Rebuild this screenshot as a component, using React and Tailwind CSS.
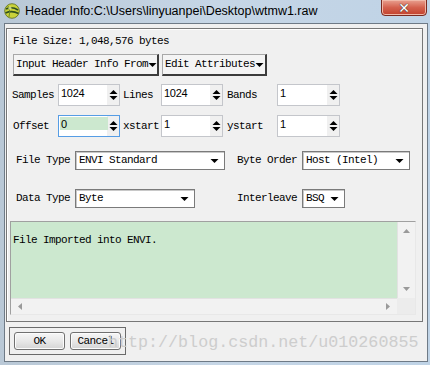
import React from "react";

const mono = { fontFamily: "'Liberation Mono', 'DejaVu Sans Mono', monospace" };

function Spin() {
  return (
    <svg width="9" height="12" viewBox="0 0 9 12" className="shrink-0">
      <polygon points="0.5,5 4.5,1 8.5,5" fill="#000" />
      <polygon points="0.5,7 8.5,7 4.5,11" fill="#000" />
    </svg>
  );
}

function Down({ w = 9 }) {
  return (
    <svg width={w} height="6" viewBox="0 0 9 6" className="shrink-0">
      <polygon points="0.5,1 8.5,1 4.5,5" fill="#000" />
    </svg>
  );
}

function SpinBox({ value, focused, w = "w-[62px]" }) {
  return (
    <div
      className={`${w} h-[22px] flex items-stretch bg-white border ${
        focused ? "border-[#569de5]" : "border-[#c4c6cb]"
      }`}
    >
      <div className="flex-1 relative pl-[2px] pt-[2px] leading-[13px]">
        {focused && <div className="absolute left-[1px] top-[1px] w-[48px] h-[13px] bg-[#cce8cf]" />}
        <div
          className="relative text-[11px] leading-[12px] tracking-[-0.3px] text-black"
          style={{ fontFamily: "'Liberation Sans', Arial, sans-serif" }}
        >
          {value}
        </div>
      </div>
      <div className="w-[12px] flex items-center justify-center bg-[#f0f0f0]">
        <Spin />
      </div>
    </div>
  );
}

function Label({ children, w, pl }) {
  return (
    <div className={`${w} ${pl} text-[11px] tracking-[-0.6px] text-black leading-[13px] whitespace-nowrap`} style={mono}>
      {children}
    </div>
  );
}

function Combo({ value, w }) {
  return (
    <div className={`${w} h-[19px] flex items-center bg-white border border-[#7a7a7a] shadow-[inset_1px_1px_0_#c8c8c8] pl-[3px] pr-[5px]`}>
      <span className="flex-1 text-[11px] tracking-[-0.6px] leading-[13px] text-black whitespace-nowrap" style={mono}>
        {value}
      </span>
      <Down />
    </div>
  );
}

function ClassicButton({ children, w }) {
  return (
    <div
      className={`${w} h-[22px] flex items-center pl-[2px] bg-[#f4f4f4] border border-t-[#a8a8a8] border-l-[#a8a8a8] border-r-2 border-b-2 border-r-[#3c3c3c] border-b-[#3c3c3c]`}
    >
      <span className="text-[11px] tracking-[-0.6px] leading-[13px] text-black whitespace-nowrap" style={mono}>
        {children}
      </span>
      <Down w={9} />
    </div>
  );
}

function AeroButton({ children }) {
  return (
    <div className="w-[51px] h-[18px] flex items-center justify-center rounded-[3px] border border-[#707070] bg-gradient-to-b from-[#f6f6f6] via-[#e8e8e8] to-[#d4d4d4] shadow-[inset_0_0_0_1px_#fcfcfc]">
      <span className="text-[11px] tracking-[-0.6px] leading-[13px] text-black" style={mono}>
        {children}
      </span>
    </div>
  );
}

function EnviIcon() {
  return (
    <svg width="16" height="16" viewBox="0 0 16 16">
      <circle cx="8" cy="8" r="7.3" fill="#c9d23a" stroke="#5b6a1a" strokeWidth="0.8" />
      <path d="M2 6 Q8 3 14 7" stroke="#2f4f1f" strokeWidth="1.6" fill="none" />
      <path d="M1.5 10 Q8 7 14.5 10.5" stroke="#2f4f1f" strokeWidth="1.6" fill="none" />
      <path d="M4 3 Q7 8 5 14" stroke="#6d8a2a" strokeWidth="1" fill="none" />
      <circle cx="6" cy="5" r="1.6" fill="#f4f7b0" opacity="0.7" />
    </svg>
  );
}

export default function App() {
  return (
    <div className="relative w-[430px] h-[365px] overflow-hidden bg-gradient-to-r from-[#b9c8d6] via-[#c6d6e6] to-[#bfd3e6]">
      {/* title bar */}
      <div className="h-[23px] flex items-start">
        <div className="ml-[4px] mt-[3px]">
          <EnviIcon />
        </div>
        <div
          className="ml-[5px] mt-[3px] text-[12.5px] leading-[16px] text-black whitespace-nowrap"
          style={{ fontFamily: "'Liberation Sans', Arial, sans-serif" }}
        >
          Header Info:C:\Users\linyuanpei\Desktop\wtmw1.raw
        </div>
        <div className="ml-auto mr-[3px] -mt-[1px] w-[46px] h-[17px] rounded-b-[4px] border border-[#7a2a20] bg-gradient-to-b from-[#e8a090] via-[#d4614e] to-[#c2402c] flex items-center justify-center shadow-[inset_0_0_0_1px_#f0b8a8]">
          <span
            className="text-white text-[14px] font-bold leading-[14px]"
            style={{ fontFamily: "'DejaVu Sans', sans-serif", textShadow: "0 0 1px #333, 0 0 1px #333" }}
          >
            ✕
          </span>
        </div>
      </div>

      {/* client area */}
      <div className="ml-[4px] w-[424px] h-[339px] bg-[#f0f0f0] border border-[#6e7a86]">
        <div className="ml-[1px] mt-[4px] w-[417px] h-[294px] border border-[#777] shadow-[inset_1px_1px_0_#fff] flex flex-col">
          {/* file size */}
          <div className="mt-[6px] pl-[6px] text-[11px] tracking-[-0.6px] leading-[13px] text-black" style={mono}>
            File Size: 1,048,576 bytes
          </div>
          {/* buttons */}
          <div className="mt-[6px] pl-[6px] flex gap-[3px]">
            <ClassicButton w="w-[146px]">Input Header Info From</ClassicButton>
            <ClassicButton w="w-[105px]">Edit Attributes</ClassicButton>
          </div>
          {/* samples row */}
          <div className="mt-[8px] pl-[5px] flex items-center">
            <Label w="w-[46px]" pl="pl-0">Samples</Label>
            <SpinBox value="1024" />
            <Label w="w-[41px]" pl="pl-[3px]">Lines</Label>
            <SpinBox value="1024" />
            <Label w="w-[54px]" pl="pl-[4px]">Bands</Label>
            <SpinBox value="1" w="w-[63px]" />
          </div>
          {/* offset row */}
          <div className="mt-[9px] pl-[5px] flex items-center">
            <Label w="w-[46px]" pl="pl-[1px]">Offset</Label>
            <SpinBox value="0" focused />
            <Label w="w-[41px]" pl="pl-[3px]">xstart</Label>
            <SpinBox value="1" />
            <Label w="w-[54px]" pl="pl-[4px]">ystart</Label>
            <SpinBox value="1" w="w-[63px]" />
          </div>
          {/* file type row */}
          <div className="mt-[14px] pl-[9px] flex items-center">
            <Label w="w-[59px]" pl="pl-0">File Type</Label>
            <Combo value="ENVI Standard" w="w-[150px]" />
            <Label w="w-[77px]" pl="pl-[12px]">Byte Order</Label>
            <Combo value="Host (Intel)" w="w-[108px]" />
          </div>
          {/* data type row */}
          <div className="mt-[19px] pl-[9px] flex items-center">
            <Label w="w-[59px]" pl="pl-0">Data Type</Label>
            <Combo value="Byte" w="w-[120px]" />
            <Label w="w-[107px]" pl="pl-[42px]">Interleave</Label>
            <Combo value="BSQ" w="w-[43px]" />
          </div>
          {/* text area */}
          <div className="mt-[13px] ml-[3px] w-[406px] h-[94px] border border-[#a0a0a0] border-r-[#e8e8e8] border-b-[#e8e8e8] grid grid-cols-[386px_18px] grid-rows-[76px_16px]">
            <div className="bg-[#cce8cf] pl-[2px] pt-[3px]">
              <span className="text-[11px] tracking-[-0.6px] leading-[13px] text-black" style={mono}>
                File Imported into ENVI.
              </span>
            </div>
            <div className="bg-[#f2f2f2] border-l border-[#e2e2e2] flex flex-col items-center justify-between py-[7px]">
              <svg width="7" height="4" viewBox="0 0 7 4"><polygon points="0,4 7,4 3.5,0" fill="#9a9a9a" /></svg>
              <svg width="7" height="4" viewBox="0 0 7 4"><polygon points="0,0 7,0 3.5,4" fill="#9a9a9a" /></svg>
            </div>
            <div className="bg-[#f2f2f2] border-t border-[#e2e2e2] flex items-center justify-between px-[7px]">
              <svg width="4" height="7" viewBox="0 0 4 7"><polygon points="4,0 4,7 0,3.5" fill="#9a9a9a" /></svg>
              <svg width="4" height="7" viewBox="0 0 4 7"><polygon points="0,0 0,7 4,3.5" fill="#9a9a9a" /></svg>
            </div>
            <div className="bg-[#ececec]" />
          </div>
        </div>

        {/* OK / Cancel */}
        <div className="ml-[4px] mt-[5px] w-[117px] h-[28px] border border-[#6a6a6a] pl-[4px] pt-[4px] flex gap-[5px]">
          <AeroButton>OK</AeroButton>
          <AeroButton>Cancel</AeroButton>
        </div>
      </div>

      {/* watermark */}
      <div
        className="absolute left-[108px] top-[333px] text-[16.7px] leading-[20px] text-[#cdcdcd] whitespace-nowrap pointer-events-none"
        style={mono}
      >
        http://blog.csdn.net/u010260855
      </div>
    </div>
  );
}
